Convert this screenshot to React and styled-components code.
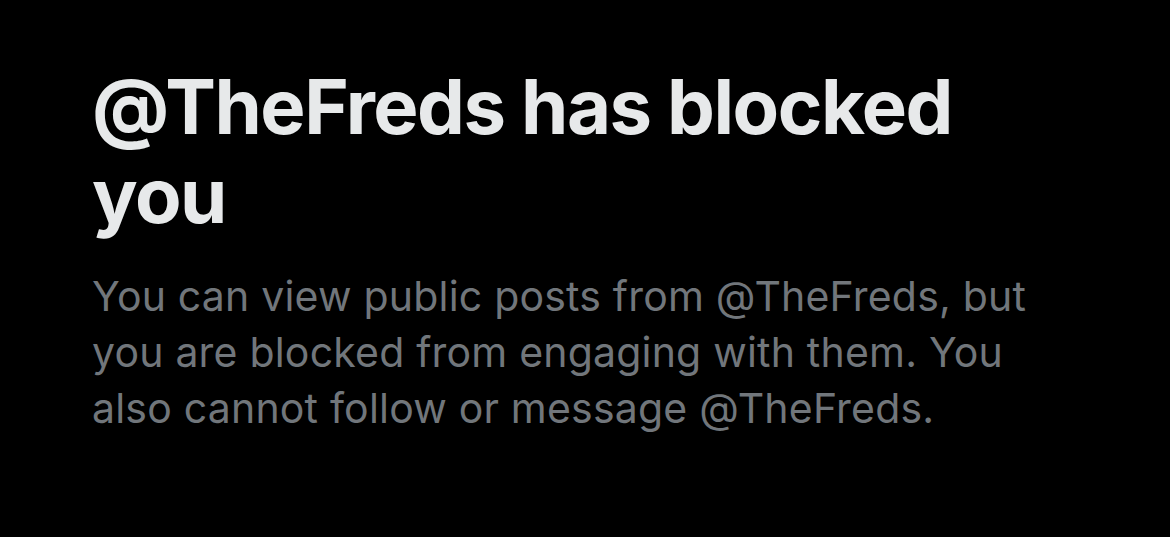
import React from "react";
import styled, { createGlobalStyle } from "styled-components";

const GlobalStyle = createGlobalStyle`
    html, body {
        margin: 0;
        padding: 0;
        background: #000000;
    }
`
const Page = styled.div`
    width: 1170px;
    height: 537px;
    background: #000000;
    box-sizing: border-box;
    padding: 62px 0 0 92px;
    font-family: Inter, "Liberation Sans", sans-serif;
`
const Notice = styled.div`
    width: 960px;
    display: flex;
    flex-direction: column;
`
const Title = styled.h1`
    margin: 0;
    color: #e7e9ea;
    font-size: 76px;
    line-height: 89px;
    font-weight: 700;
    letter-spacing: -1.5px;
`
const Body = styled.p`
    margin: 28px 0 0;
    color: #71767b;
    font-size: 41px;
    line-height: 56px;
    font-weight: 400;
    letter-spacing: 0.2px;
`

const App = () => {
    return (
        <Page>
            <GlobalStyle />
            <Notice>
                <Title>@TheFreds has blocked you</Title>
                <Body>
                    You can view public posts from @TheFreds, but you are blocked from engaging with them. You also cannot follow or message @TheFreds.
                </Body>
            </Notice>
        </Page>
    )
}
export default App
